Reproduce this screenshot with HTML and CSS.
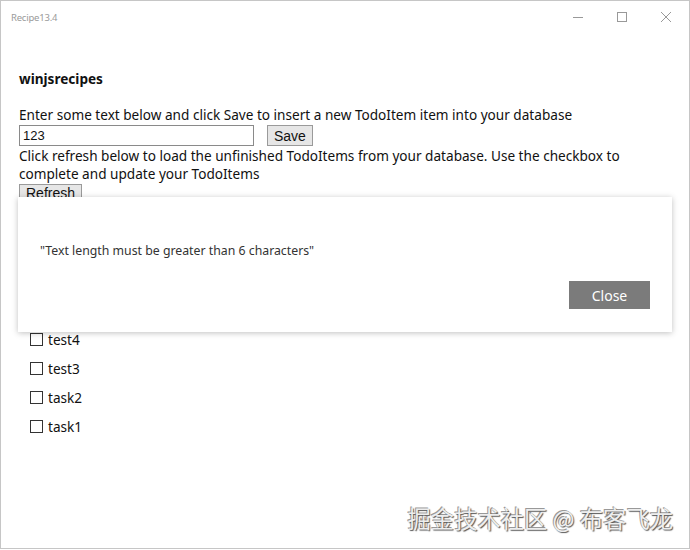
FILE: index.html
```html
<!DOCTYPE html>
<html>
<head>
<meta charset="utf-8">
<link rel="stylesheet" href="styles.css">
</head>
<body>
<div class="window">
  <div class="titlebar">
    <span class="title">Recipe13.4</span>
    <div class="controls">
      <svg class="ctl" width="12" height="12" viewBox="0 0 12 12"><path d="M1 6.5h10" stroke="#999" stroke-width="1" fill="none"/></svg>
      <svg class="ctl" width="12" height="12" viewBox="0 0 12 12"><rect x="1.5" y="1.5" width="9" height="9" stroke="#999" stroke-width="1" fill="none"/></svg>
      <svg class="ctl" width="12" height="12" viewBox="0 0 12 12"><path d="M1 1L11 11M11 1L1 11" stroke="#999" stroke-width="1" fill="none"/></svg>
    </div>
  </div>
  <div class="content">
    <h1 class="heading">winjsrecipes</h1>
    <p class="line">Enter some text below and click Save to insert a new TodoItem item into your database</p>
    <div class="form-row">
      <input class="text-input" type="text" value="123">
      <button class="btn">Save</button>
    </div>
    <p class="line">Click refresh below to load the unfinished TodoItems from your database. Use the checkbox to complete and update your TodoItems</p>
    <button class="btn refresh">Refresh</button>
    <ul class="todo-list">
      <li class="todo"><span class="box"></span>test4</li>
      <li class="todo"><span class="box"></span>test3</li>
      <li class="todo"><span class="box"></span>task2</li>
      <li class="todo"><span class="box"></span>task1</li>
    </ul>
  </div>
  <div class="dialog">
    <p class="dialog-msg">"Text length must be greater than 6 characters"</p>
    <div class="dialog-actions">
      <button class="close-btn">Close</button>
    </div>
  </div>
  <div class="watermark">掘金技术社区 @ 布客飞龙</div>
</div>
</body>
</html>
```
FILE: styles.css
```css
html, body {
  margin: 0;
  padding: 0;
  background: #fff;
}
.window {
  position: relative;
  box-sizing: border-box;
  width: 690px;
  height: 549px;
  border: 1px solid #c6c6c6;
  background: #fff;
  overflow: hidden;
  font-family: "Noto Sans", "Open Sans", sans-serif;
  color: #111;
}
.titlebar {
  height: 32px;
  display: flex;
  align-items: center;
  justify-content: space-between;
  padding: 0 0 0 10px;
}
.title {
  font-size: 9.5px;
  letter-spacing: -0.2px;
  color: #9a9a9a;
  font-family: "Noto Sans", sans-serif;
}
.controls {
  display: flex;
  gap: 32px;
  padding-right: 17px;
}
.content {
  padding: 0 0 0 18px;
}
.heading {
  margin: 36px 0 0;
  font-size: 13.6px;
  font-weight: 700;
  line-height: 20px;
}
.line {
  margin: 17px 0 0;
  font-size: 13.6px;
  line-height: 18px;
  width: 620px;
}
.form-row + .line { margin-top: 1px; }
.form-row {
  display: flex;
  align-items: center;
  gap: 13px;
  margin-top: 1px;
}
.text-input {
  box-sizing: border-box;
  width: 235px;
  height: 21px;
  border: 1px solid #8a8a8a;
  padding: 0 3px;
  font: 13px "Liberation Sans", Arial, sans-serif;
  color: #111;
}
.btn {
  box-sizing: border-box;
  height: 21px;
  padding: 0 6px;
  border: 1px solid #9a9a9a;
  background: #e6e6e6;
  font: 14px "Liberation Sans", Arial, sans-serif;
  color: #111;
}
.refresh {
  display: block;
  margin-top: 1px;
  height: 18px;
}
.todo-list {
  list-style: none;
  margin: 123px 0 0;
  padding: 0 0 0 11px;
}
.todo {
  display: flex;
  align-items: center;
  gap: 5px;
  height: 29px;
  font-size: 13.6px;
  line-height: 18px;
}
.box {
  box-sizing: border-box;
  width: 13px;
  height: 13px;
  border: 1px solid #333;
  background: #fff;
}
.dialog {
  position: absolute;
  left: 17px;
  top: 196px;
  width: 654px;
  height: 135px;
  box-sizing: border-box;
  background: #fff;
  box-shadow: 0 1px 6px rgba(0,0,0,0.25);
  padding: 44px 22px 0 22px;
  display: flex;
  flex-direction: column;
}
.dialog-msg {
  margin: 0;
  font-size: 12.3px;
  line-height: 20px;
  color: #333;
}
.dialog-actions {
  display: flex;
  justify-content: flex-end;
  margin-top: 20px;
}
.close-btn {
  width: 81px;
  height: 28px;
  border: none;
  background: #7b7b7b;
  color: #fff;
  font: 14px "Noto Sans", sans-serif;
}
.watermark {
  position: absolute;
  right: 16px;
  bottom: 13px;
  font-family: "Noto Sans CJK SC", sans-serif;
  font-size: 23.3px;
  color: #eee;
  text-shadow: 1px 1px 1px #555, -1px -1px 0 #999;
}
```
